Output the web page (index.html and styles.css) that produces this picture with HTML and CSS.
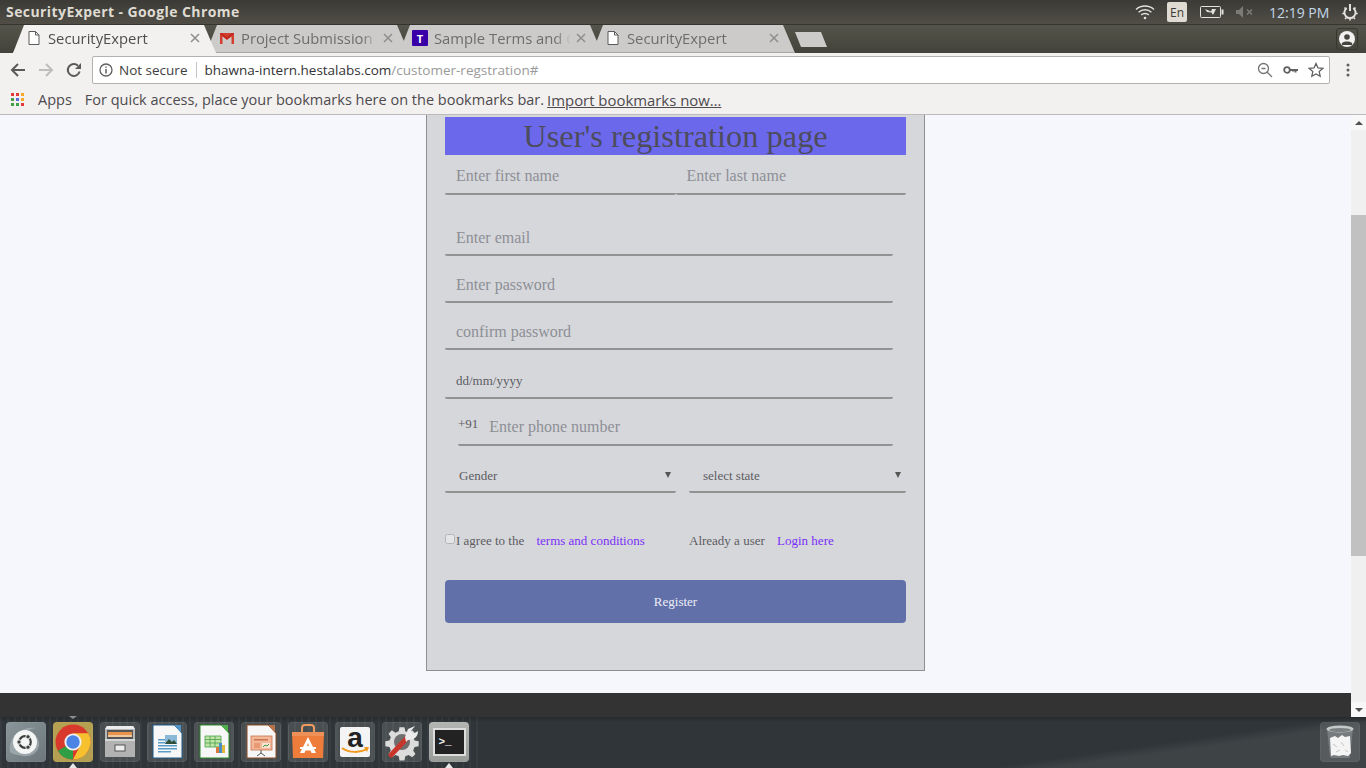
FILE: index.html
```html
<!DOCTYPE html>
<html lang="en">
<head>
    <meta charset="UTF-8">
    <meta name="viewport" content="width=device-width, initial-scale=1.0">
    <title>SecurityExpert</title>
    <link rel="stylesheet" href="styles.css">
</head>
<body>
    <div class="topbar">
        <div class="win-title">SecurityExpert - Google Chrome</div>
        <div class="tray">
            <svg class="wifi" width="20" height="16" viewBox="0 0 20 16" fill="none" stroke="#e4e2de" stroke-width="1.4"><path d="M1 5.500c5-4.600 13-4.600 18 0"/><path d="M3.600 8.200c3.600-3.200 9.200-3.200 12.800 0"/><path d="M6.200 10.900c2.100-1.800 5.500-1.800 7.600 0"/><circle cx="10" cy="14" r="1.300" fill="#e4e2de" stroke="none"/></svg>
            <div class="lang">En</div>
            <svg class="battery" width="24" height="12" viewBox="0 0 24 12" fill="none"><rect x=".5" y=".5" width="20" height="11" rx="1" stroke="#e4e2de"/><rect x="21.500" y="3.500" width="2" height="5" fill="#e4e2de"/><path d="M5 3l6 2.400L12 3l4 0-3 6-1.500-2.600L7 6z" fill="#e4e2de"/></svg>
            <svg class="mute" width="18" height="12" viewBox="0 0 18 12"><path d="M0 4h3l4-4v12l-4-4H0z" fill="#7c7b74"/><path d="M11 3.500l5 5m0-5l-5 5" stroke="#7c7b74" stroke-width="1.600"/></svg>
            <div class="clock">12:19 PM</div>
            <svg class="power" width="16" height="18" viewBox="0 0 16 18" fill="none" stroke="#e4e2de"><path d="M8 1v7" stroke-width="2"/><path d="M4.700 5a5.600 5.600 0 1 0 6.600 0" stroke-width="2"/><path d="M2.500 4.500l1.200 1.200M13.500 4.500l-1.200 1.200M.3 10.500h2M13.700 10.500h2M3 16l1.200-1.200M13 16l-1.200-1.200M8 15.500v2" stroke-width="1.600"/></svg>
        </div>
    </div>

    <div class="tabstrip">
        <div class="tab active">
            <svg class="fav" width="16" height="16" viewBox="0 0 16 16" fill="#fff" stroke="#5a5a5a"><path d="M3 1.500h6.500l3.500 3.500v9.500H3z"/><path d="M9.500 1.500V5H13" fill="none"/></svg>
            <span class="tab-title">SecurityExpert</span>
            <svg class="close" width="12" height="12" viewBox="0 0 12 12" stroke="#8e8e8e" stroke-width="1.500"><path d="M2 2l8 8m0-8l-8 8"/></svg>
        </div>
        <div class="tab">
            <svg class="fav" width="16" height="16" viewBox="0 0 16 16"><path d="M1 3h14v11h-2.500V6.500L8 10 3.500 6.500V14H1z" fill="#d23f31"/><path d="M1 3h2l5 4 5-4h2v1L8 9.500 1 4z" fill="#c5281c"/></svg>
            <span class="tab-title">Project Submission</span>
            <svg class="close" width="12" height="12" viewBox="0 0 12 12" stroke="#8e8e8e" stroke-width="1.500"><path d="M2 2l8 8m0-8l-8 8"/></svg>
        </div>
        <div class="tab">
            <span class="fav fav-t">T</span>
            <span class="tab-title">Sample Terms and C</span>
            <svg class="close" width="12" height="12" viewBox="0 0 12 12" stroke="#8e8e8e" stroke-width="1.500"><path d="M2 2l8 8m0-8l-8 8"/></svg>
        </div>
        <div class="tab">
            <svg class="fav" width="16" height="16" viewBox="0 0 16 16" fill="#fff" stroke="#5a5a5a"><path d="M3 1.500h6.500l3.500 3.500v9.500H3z"/><path d="M9.500 1.500V5H13" fill="none"/></svg>
            <span class="tab-title">SecurityExpert</span>
            <svg class="close" width="12" height="12" viewBox="0 0 12 12" stroke="#8e8e8e" stroke-width="1.500"><path d="M2 2l8 8m0-8l-8 8"/></svg>
        </div>
        <div class="newtab"></div>
        <div class="profile">
            <svg width="16" height="16" viewBox="0 0 16 16"><circle cx="8" cy="8" r="8" fill="#f2f1f0"/><circle cx="8" cy="6" r="2.800" fill="#47463e"/><path d="M2.800 12.200c1.500-2.400 8.900-2.400 10.400 0v1.800H2.800z" fill="#47463e"/></svg>
        </div>
    </div>

    <div class="toolbar">
        <svg class="nav nav-back" width="16" height="16" viewBox="0 0 16 16" fill="none" stroke="#5a5a5a" stroke-width="2"><path d="M15 8H2M8 2L2 8l6 6"/></svg>
        <svg class="nav nav-fwd" width="16" height="16" viewBox="0 0 16 16" fill="none" stroke="#bdbdbd" stroke-width="2"><path d="M1 8h13M8 2l6 6-6 6"/></svg>
        <svg class="nav nav-reload" width="16" height="16" viewBox="0 0 16 16" fill="none" stroke="#5a5a5a" stroke-width="2"><path d="M13.600 9.500A6 6 0 1 1 12 3.700"/><path d="M15 1v6H9z" fill="#5a5a5a" stroke="none"/></svg>
        <div class="omnibox">
            <svg class="info" width="14" height="14" viewBox="0 0 14 14" fill="none" stroke="#5f5f5f" stroke-width="1.300"><circle cx="7" cy="7" r="6"/><path d="M7 6v4.500M7 3.500v1.300" stroke-width="1.500"/></svg>
            <span class="secure">Not secure</span>
            <span class="sep"></span>
            <span class="url">bhawna-intern.hestalabs.com<span class="url-path">/customer-regstration#</span></span>
            <svg class="omni-icon" width="16" height="16" viewBox="0 0 16 16" fill="none" stroke="#757575" stroke-width="1.300"><circle cx="6.500" cy="6.500" r="5"/><path d="M4.500 6.500h4M10 10l5 5"/></svg>
            <svg class="omni-icon" width="15" height="16" viewBox="0 0 15 16" fill="none" stroke="#616161"><circle cx="4" cy="8" r="2.800" stroke-width="1.800"/><path d="M7 8h8M12.500 8v2.500M10 8v1.500" stroke-width="2"/></svg>
            <svg class="omni-icon" width="16" height="16" viewBox="0 0 16 16" fill="none" stroke="#616161" stroke-width="1.300"><path d="M8 1.500l2 4.400 4.800.5-3.600 3.200 1 4.700L8 11.900l-4.200 2.400 1-4.700L1.200 6.400 6 5.900z"/></svg>
        </div>
        <svg class="menu" width="4" height="14" viewBox="0 0 4 14" fill="#5f5f5f"><circle cx="2" cy="2" r="1.500"/><circle cx="2" cy="7" r="1.500"/><circle cx="2" cy="12" r="1.500"/></svg>
    </div>

    <div class="bookmarks">
        <svg class="apps" width="13" height="13" viewBox="0 0 13 13">
            <rect width="3" height="3" fill="#e53935"/><rect x="5" width="3" height="3" fill="#e53935"/><rect x="10" width="3" height="3" fill="#f9a825"/>
            <rect y="5" width="3" height="3" fill="#43a047"/><rect x="5" y="5" width="3" height="3" fill="#5e6bd8"/><rect x="10" y="5" width="3" height="3" fill="#f9a825"/>
            <rect y="10" width="3" height="3" fill="#43a047"/><rect x="5" y="10" width="3" height="3" fill="#43a047"/><rect x="10" y="10" width="3" height="3" fill="#e53935"/>
        </svg>
        <span class="apps-label">Apps</span>
        <span>For quick access, place your bookmarks here on the bookmarks bar.</span>
        <a class="import" href="#">Import bookmarks now…</a>
    </div>

    <div class="viewport">
        <div class="page">
            <div class="content">
                <form class="card">
                    <h1 class="card-title">User's registration page</h1>
                    <div class="name-row">
                        <input class="line-input" type="text" placeholder="Enter first name">
                        <input class="line-input" type="text" placeholder="Enter last name">
                    </div>
                    <input class="line-input wide email" type="email" placeholder="Enter email">
                    <input class="line-input wide" type="password" placeholder="Enter password">
                    <input class="line-input wide" type="password" placeholder="confirm password">
                    <input class="line-input wide date" type="text" placeholder="dd/mm/yyyy">
                    <div class="phone-row">
                        <span class="prefix">+91</span>
                        <input class="phone-input" type="tel" placeholder="Enter phone number">
                    </div>
                    <div class="select-row">
                        <div class="select-wrap select-gender"><select class="line-select"><option>Gender</option></select></div>
                        <div class="select-wrap"><select class="line-select"><option>select state</option></select></div>
                    </div>
                    <div class="agree-row">
                        <label class="agree"><input class="check" type="checkbox">I agree to the <a href="#">terms and conditions</a></label>
                        <div class="agree">Already a user <a href="#">Login here</a></div>
                    </div>
                    <button class="register" type="button">Register</button>
                </form>
            </div>
            <div class="page-footer"></div>
        </div>
        <div class="scrollbar">
            <div class="sb-btn"><span class="sb-up"></span></div>
            <div class="sb-thumb"></div>
            <div class="sb-btn sb-end"><span class="sb-down"></span></div>
        </div>
    </div>

    <div class="dock">
        <div class="dock-item tile-ubuntu">
            <svg width="40" height="40" viewBox="0 0 40 40"><path d="M4 30C2 14 16 4 30 6c-8 1-10 4-10 4 8 0 14 6 13 14-2 8-9 11-16 10C11 33 6 32 4 30z" fill="#aab4b6" opacity=".7"/><circle cx="19" cy="20" r="12" fill="#f4f5f5"/><circle cx="19" cy="20" r="5.800" fill="none" stroke="#3f3f3f" stroke-width="2.200"/><g fill="#3f3f3f" stroke="#f4f5f5"><circle cx="13" cy="20" r="2.200"/><circle cx="22" cy="14.800" r="2.200"/><circle cx="22" cy="25.200" r="2.200"/></g></svg>
        </div>
        <div class="dock-item tile-chrome mark-top mark-bottom">
            <svg width="40" height="40" viewBox="0 0 40 40"><circle cx="20" cy="20" r="17.500" fill="#d9382c"/><path d="M35.160 11.250A17.500 17.500 0 0 1 20 37.500L27 24l-7-12.750z" fill="#f6c02e"/><path d="M20 37.500A17.500 17.500 0 0 1 4.840 28.750L13 24l7 4z" fill="#2f9e44"/><circle cx="20" cy="20" r="8.600" fill="#f1f1f1"/><circle cx="20" cy="20" r="6.700" fill="#4c84e6"/></svg>
        </div>
        <div class="dock-item">
            <svg width="40" height="40" viewBox="0 0 40 40"><path d="M5 7l2-3h26l2 3v27a2 2 0 0 1-2 1H7a2 2 0 0 1-2-1z" fill="#b9b9b9"/><path d="M7 4h26l2 3H5z" fill="#ececec"/><rect x="7" y="8" width="26" height="9" fill="#555"/><rect x="8" y="10" width="24" height="3" fill="#e6934c"/><rect x="8" y="13" width="24" height="2" fill="#f1c7a0"/><rect x="5" y="17" width="30" height="18" rx="1" fill="#b2b2b2"/><rect x="5" y="17" width="30" height="2" fill="#d6d6d6"/><rect x="15" y="23" width="10" height="6" fill="#eee" stroke="#555"/></svg>
        </div>
        <div class="dock-item">
            <svg width="40" height="40" viewBox="0 0 40 40"><path d="M6 3h21l8 8v25H6z" fill="#f7f7f7" stroke="#1d5a8a"/><path d="M27 3h7v8z" fill="#4f93c4"/><rect x="11" y="17" width="8" height="1.500" fill="#5a9cc8"/><rect x="11" y="20" width="8" height="1.500" fill="#5a9cc8"/><rect x="11" y="23" width="19" height="1.500" fill="#5a9cc8"/><rect x="11" y="26" width="19" height="1.500" fill="#5a9cc8"/><rect x="11" y="29" width="13" height="1.500" fill="#5a9cc8"/><path d="M18 13h12v9H18z" fill="#8ab8d6"/><path d="M18 22l4-5 3 3 2-2 3 4z" fill="#2f4f3a"/></svg>
        </div>
        <div class="dock-item">
            <svg width="40" height="40" viewBox="0 0 40 40"><path d="M6 3h21l8 8v25H6z" fill="#f7f7f7" stroke="#2b8a2b"/><path d="M27 3h7v8z" fill="#4db04a"/><path d="M11 14h16v11H11z" fill="#bfe3a9"/><path d="M11 14h16M11 17.500h16M11 21h16M11 25h16M11 14v11M16 14v11M21 14v11M27 14v11" stroke="#4ca34a" stroke-width=".8" fill="none"/><rect x="22" y="25" width="3" height="6" fill="#d9793c"/><rect x="25" y="21" width="3" height="10" fill="#4a90c8"/><rect x="28" y="23" width="3" height="8" fill="#e0b93c"/></svg>
        </div>
        <div class="dock-item">
            <svg width="40" height="40" viewBox="0 0 40 40"><path d="M6 3h21l8 8v25H6z" fill="#f7f7f7" stroke="#8a4a24"/><path d="M27 3h7v8z" fill="#b8734a"/><rect x="10" y="14" width="21" height="14" fill="#f3b89a" stroke="#c9744a" stroke-width=".8"/><rect x="13" y="17" width="14" height="1.500" fill="#c9744a"/><rect x="13" y="21" width="6" height="5" fill="#e89a72"/><rect x="21" y="21" width="8" height="5" fill="#fbe3d4"/><path d="M22 25l2-2 2 1 2-2" stroke="#3f9a3f" fill="none"/><path d="M20 28v3m-4 3l4-3 4 3" stroke="#555" fill="none"/></svg>
        </div>
        <div class="dock-item">
            <svg width="40" height="40" viewBox="0 0 40 40"><path d="M14 10V6a3 3 0 0 1 3-3h6a3 3 0 0 1 3 3v4" fill="none" stroke="#f09a5e" stroke-width="2"/><path d="M4 10h32l-1 26H5z" fill="#ee7d3b"/><path d="M4 10h32v4H4z" fill="#f09059"/><path d="M20 15l-8 16h4.500l1-2.500h5l1 2.500H28zM19 24l1-3 1 3z" fill="#fff"/><rect x="12" y="25" width="16" height="2" fill="#fff"/></svg>
        </div>
        <div class="dock-item">
            <svg class="amazon-bg" width="40" height="40" viewBox="0 0 40 40"><rect x="5" y="5" width="30" height="30" rx="2" fill="#f4f4f4"/><path d="M7 26c7 5 18 5 25 1" fill="none" stroke="#f29a1f" stroke-width="2"/><path d="M29 25l5 0-2 5z" fill="#f29a1f"/></svg>
            <span class="amazon-a">a</span>
        </div>
        <div class="dock-item">
            <svg width="40" height="40" viewBox="0 0 40 40"><path d="M17 2h6l1 5 4 1.700 4.300-2.800 4 4-2.800 4.300 1.700 4 5 1v6l-5 1-1.700 4 2.800 4.300-4 4-4.300-2.800-4 1.700-1 5h-6l-1-5-4-1.700-4.300 2.800-4-4 2.800-4.300-1.700-4-5-1v-6l5-1 1.700-4-2.800-4.300 4-4 4.300 2.800 4-1.700z" fill="#dcdcdc" transform="translate(3.500 3.500) scale(.825)"/><circle cx="20" cy="20" r="8" fill="#6e6e6e"/><path d="M9 33L26 15" stroke="#c8352b" stroke-width="5" stroke-linecap="round"/><path d="M23 15l3-8 7-3-4 5 2 3 5-3c0 6-4 9-10 9l-2 2z" fill="#ececec"/></svg>
        </div>
        <div class="dock-item tile-term mark-bottom">
            <div class="term-screen"><span class="term-text">&gt;_</span></div>
        </div>
        <div class="dock-item dock-trash">
            <svg width="40" height="40" viewBox="0 0 40 40"><path d="M7 7h26l-3 28a2 2 0 0 1-2 1H12a2 2 0 0 1-2-1z" fill="#80868a" opacity=".75"/><ellipse cx="20" cy="7" rx="13.500" ry="3.500" fill="#c6c9c9"/><ellipse cx="20" cy="8" rx="11" ry="2" fill="#7c8080"/><path d="M10 16l5-2 3 2 4-3 3 2 5-1 1 17-3 3-5-1-4 1-5-1-3 1z" fill="#f4f4f4"/><path d="M13 22l4 3M21 20l3 4M16 30l4-2M25 28l3 2" stroke="#c4c4c4"/></svg>
        </div>
    </div>
</body>
</html>
```

FILE: styles.css
```css
* {
    box-sizing: border-box;
}

body {
    display: flex;
    flex-direction: column;
    height: 100vh;
    margin: 0;
    overflow: hidden;
    font-family: "Open Sans", "Noto Sans", sans-serif;
}

/* ubuntu top panel */
.topbar {
    display: flex;
    align-items: center;
    justify-content: space-between;
    height: 24px;
    padding: 0 8px 0 6px;
    background: linear-gradient(#3b3a36, #504e46);
}

.win-title {
    padding-bottom: 1px;
    color: #dfdbd2;
    font-size: 14px;
    font-weight: 700;
    letter-spacing: .42px;
}

.tray {
    display: flex;
    align-items: center;
}

.wifi { margin-right: 12px; }

.lang {
    display: flex;
    align-items: center;
    justify-content: center;
    width: 20px;
    height: 20px;
    margin-right: 13px;
    border-radius: 2px;
    background: #dfdbd2;
    color: #3c3b37;
    font-size: 12px;
}

.battery { margin-right: 12px; }
.mute { margin-right: 15px; }

.clock {
    width: 60px;
    margin-right: 13px;
    color: #c4d8e8;
    font-size: 14px;
    white-space: nowrap;
}

/* chrome tabs */
.tabstrip {
    display: flex;
    align-items: flex-end;
    height: 29px;
    padding-left: 13px;
    background: linear-gradient(#55544a, #44433b);
    border-top: 1px solid #35342f;
}

.tab {
    display: flex;
    align-items: center;
    flex: none;
    width: 203px;
    height: 28px;
    margin-right: -10px;
    padding: 0 15px 1px;
    background: #cdcbc9;
    border-bottom: 1px solid #a9a7a5;
    color: #6d6d6d;
    font-size: 14.8px;
    clip-path: polygon(0 100%, 11px 0, calc(100% - 12px) 0, 100% 100%);
}

.tab.active {
    position: relative;
    z-index: 1;
    background: #f2f1f0;
    border-bottom-color: #f2f1f0;
    color: #4e4e4e;
}

.fav {
    flex: none;
    width: 16px;
    height: 16px;
    margin: 0 6px 0 -2px;
}

.fav-t {
    display: flex;
    align-items: center;
    justify-content: center;
    border-radius: 1px;
    background: #3a00a8;
    color: #fff;
    font-size: 11px;
    font-weight: 700;
}

.tab-title {
    flex: 1;
    overflow: hidden;
    white-space: nowrap;
    -webkit-mask-image: linear-gradient(to right, #000 88%, transparent);
    mask-image: linear-gradient(to right, #000 88%, transparent);
}

.close {
    flex: none;
    margin-left: 4px;
}

.newtab {
    flex: none;
    width: 32px;
    height: 15px;
    margin: 0 0 6px 10px;
    background: #cdcbc9;
    clip-path: polygon(0 0, 26px 0, 100% 100%, 6px 100%);
}

.profile {
    display: flex;
    align-items: center;
    justify-content: center;
    width: 22px;
    height: 22px;
    margin: 0 8px 3px auto;
    border: 1px solid #38372f;
    border-radius: 3px;
}

/* toolbar + bookmarks */
.toolbar {
    display: flex;
    align-items: center;
    height: 34px;
    padding: 0 0 0 10px;
    background: #f2f1f0;
}

.nav-back { margin-right: 12px; }
.nav-fwd { margin-right: 12px; }
.nav-reload { margin-right: 10px; }

.omnibox {
    display: flex;
    align-items: center;
    width: 1238px;
    height: 28px;
    padding: 0 5px 0 6px;
    background: #fff;
    border: 1px solid #b4b2b0;
    border-radius: 2px;
    font-size: 13.5px;
}

.secure {
    margin-left: 6px;
    color: #3e3e3e;
}

.sep {
    width: 1px;
    height: 16px;
    margin: 0 7px 0 9px;
    background: #c4c4c4;
}

.url {
    flex: 1;
    color: #333;
}

.url-path { color: #9a9a9a; }

.omni-icon { margin-left: 10px; }

.menu { margin-left: 16px; }

.bookmarks {
    display: flex;
    align-items: center;
    flex: none;
    height: 28px;
    padding: 0 0 2px 11px;
    background: #f2f1f0;
    border-bottom: 1px solid #bbb;
    color: #4e4a4e;
    font-size: 14.5px;
}

.apps { margin-right: 14px; }
.apps-label { margin-right: 13px; }

.import {
    margin-left: 3px;
    color: #4e4a4e;
    font-size: 14.9px;
}

/* page area */
.viewport {
    display: flex;
    flex: 1;
    min-height: 0;
}

.page {
    display: flex;
    flex-direction: column;
    flex: 1;
}

.content {
    flex: 1;
    background: #f5f7fc;
}

.page-footer {
    height: 24px;
    background: #333;
}

.card {
    width: 499px;
    margin: 0 auto;
    padding: 2px 18px 47px;
    background: #d6d7db;
    border: 1px solid #8f8f8f;
    border-top: 0;
    font-family: "Liberation Serif", serif;
}

.card-title {
    height: 38px;
    margin: 0;
    background: #6c68ec;
    color: #4d4c5d;
    font-size: 32.4px;
    font-weight: 400;
    line-height: 38px;
    text-align: center;
}

.name-row {
    display: flex;
}

.line-input {
    display: block;
    width: 231px;
    height: 39px;
    padding: 5px 11px 0;
    background: transparent;
    border: 0;
    border-bottom: 2px solid #929292;
    border-radius: 2px;
    font-family: inherit;
    font-size: 16px;
    outline: none;
}

.name-row .line-input {
    height: 40px;
    padding-top: 4px;
}

.line-input::placeholder,
.phone-input::placeholder {
    color: #8d8f96;
    opacity: 1;
}

.wide {
    width: 448px;
    margin-top: 8px;
}

.email { margin-top: 22px; }

.date {
    margin-top: 10px;
    padding-top: 3px;
}

.date::placeholder {
    color: #5c5c62;
    font-size: 13px;
}

.phone-row {
    display: flex;
    width: 435px;
    height: 39px;
    margin: 8px 0 0 13px;
    border-bottom: 2px solid #929292;
    border-radius: 2px;
}

.prefix {
    padding-top: 9px;
    color: #5c5c62;
    font-size: 13px;
}

.phone-input {
    flex: 1;
    padding: 2px 0 0 11px;
    background: transparent;
    border: 0;
    font-family: inherit;
    font-size: 16px;
    outline: none;
}

.select-row {
    display: flex;
    justify-content: space-between;
    margin-top: 11px;
}

.select-wrap {
    position: relative;
    width: 217px;
}

.select-gender { width: 231px; }

.select-wrap::after {
    content: "";
    position: absolute;
    right: 5px;
    top: 15px;
    border: 3px solid transparent;
    border-top: 6px solid #555;
    border-bottom: 0;
}

.line-select {
    display: block;
    width: 100%;
    height: 36px;
    padding: 2px 14px 0;
    background: transparent;
    border: 0;
    border-bottom: 2px solid #929292;
    border-radius: 2px;
    color: #5c5c62;
    font-family: inherit;
    font-size: 13px;
    outline: none;
    appearance: none;
    -webkit-appearance: none;
}

.agree-row {
    display: grid;
    grid-template-columns: 244px 1fr;
    height: 15px;
    margin-top: 40px;
    color: #5c5c62;
    font-size: 13px;
    line-height: 15px;
}

.agree a {
    margin-left: 9px;
    color: #7a2ff7;
    text-decoration: none;
}

.check {
    width: 10px;
    height: 10px;
    margin: 1px 1px 0 0;
    vertical-align: top;
    opacity: .35;
}

.register {
    display: block;
    width: 100%;
    height: 43px;
    margin-top: 32px;
    background: #6270aa;
    border: 0;
    border-radius: 4px;
    color: #eceef6;
    font-family: inherit;
    font-size: 13px;
}

.scrollbar {
    display: flex;
    flex-direction: column;
    flex: none;
    width: 15px;
    background: #f0f0f0;
}

.sb-btn {
    display: flex;
    align-items: center;
    justify-content: center;
    height: 15px;
    background: #f8f8f8;
}

.sb-end { margin-top: auto; }

.sb-up {
    border: 4px solid transparent;
    border-top: 0;
    border-bottom: 4px solid #505050;
}

.sb-down {
    border: 4px solid transparent;
    border-bottom: 0;
    border-top: 4px solid #505050;
}

.sb-thumb {
    height: 341px;
    margin-top: 85px;
    background: #c1c1c1;
}

/* launcher */
.dock {
    display: flex;
    flex: none;
    gap: 7px;
    height: 51px;
    padding: 5px 6px 0;
    background:
        repeating-linear-gradient(90deg, rgba(255, 255, 255, .035) 0 2px, transparent 2px 7px) 0 0 / 480px 100% no-repeat,
        linear-gradient(#252a2c, rgba(37, 42, 44, 0) 5px),
        linear-gradient(172deg, #2f3538 78%, #3e4346 82%);
}

.dock-item {
    position: relative;
    display: flex;
    align-items: center;
    justify-content: center;
    flex: none;
    width: 40px;
    height: 40px;
    border-radius: 4px;
    background: rgba(255, 255, 255, .13);
    box-shadow: inset 0 0 0 1px rgba(255, 255, 255, .05);
}

.dock-trash { margin-left: auto; }

.tile-ubuntu { background: linear-gradient(135deg, #89959a, #6d777b); }
.tile-chrome { background: #b59f50; }
.tile-term { background: linear-gradient(#b3b5b3, #999b99); }

.mark-top::before,
.mark-bottom::after {
    content: "";
    position: absolute;
    left: 16px;
    border: 4px solid transparent;
}

.mark-top::before {
    top: -6px;
    border-width: 3px 4px 0;
    border-top-color: #8e8e8e;
}

.mark-bottom::after {
    bottom: -6px;
    border-width: 0 4px 5px;
    border-bottom-color: #e8e8e8;
}

.amazon-bg {
    position: absolute;
    left: 0;
    top: 0;
}

.amazon-a {
    position: relative;
    margin-top: -9px;
    color: #222;
    font-family: "Liberation Sans", sans-serif;
    font-size: 28px;
    font-weight: 700;
}

.term-screen {
    width: 33px;
    height: 28px;
    padding: 1px 4px;
    background: #222;
    border: 2px solid #dcdcdc;
    line-height: 16px;
}

.term-text {
    color: #f2f2f2;
    font-family: "Liberation Mono", monospace;
    font-size: 11px;
    font-weight: 700;
}
```
